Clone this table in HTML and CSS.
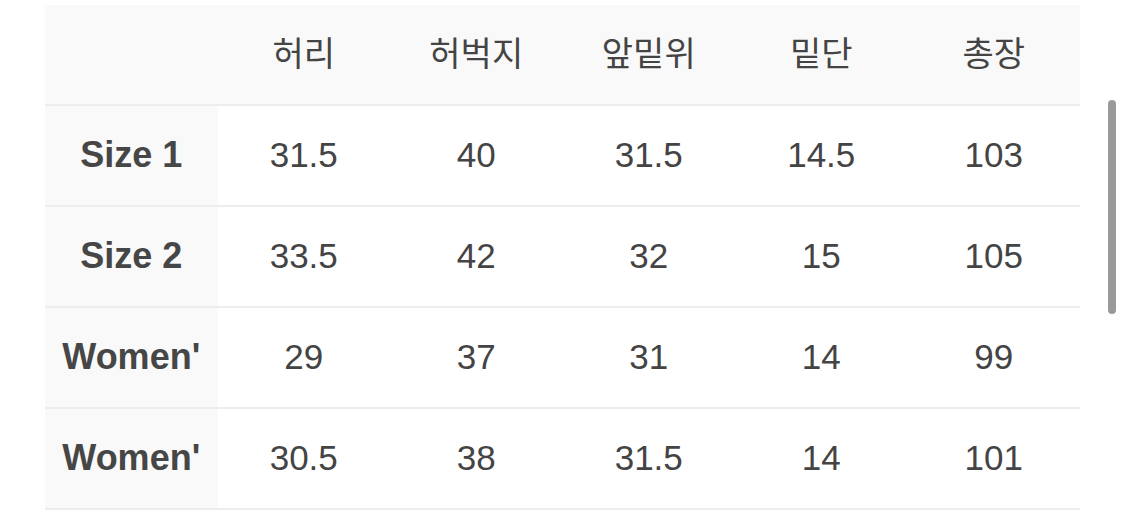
FILE: index.html
```html
<!DOCTYPE html>
<html lang="ko">
<head>
<meta charset="utf-8">
<title>Size table</title>
<link rel="stylesheet" href="styles.css">
</head>
<body>
<div class="wrap">
  <table class="size-table">
    <thead>
      <tr>
        <th class="corner"></th>
        <th>허리</th>
        <th>허벅지</th>
        <th>앞밑위</th>
        <th>밑단</th>
        <th>총장</th>
      </tr>
    </thead>
    <tbody>
      <tr><th class="label">Size 1</th><td>31.5</td><td>40</td><td>31.5</td><td>14.5</td><td>103</td></tr>
      <tr><th class="label">Size 2</th><td>33.5</td><td>42</td><td>32</td><td>15</td><td>105</td></tr>
      <tr><th class="label">Women'</th><td>29</td><td>37</td><td>31</td><td>14</td><td>99</td></tr>
      <tr><th class="label">Women'</th><td>30.5</td><td>38</td><td>31.5</td><td>14</td><td>101</td></tr>
    </tbody>
  </table>
  <div class="scrollbar"></div>
</div>
</body>
</html>
```
FILE: styles.css
```css
html, body {
  margin: 0;
  padding: 0;
  background: #ffffff;
}
body {
  font-family: "Liberation Sans", "Noto Sans CJK KR", sans-serif;
  color: #444444;
}
.wrap {
  position: relative;
  width: 1125px;
  height: 514px;
  overflow: hidden;
  padding: 5px 45px 0;
  box-sizing: border-box;
}
.size-table {
  width: 1035px;
  table-layout: fixed;
  border-collapse: collapse;
  border-spacing: 0;
}
.size-table th,
.size-table td {
  height: 97px;
  padding: 0 0 2px;
  text-align: center;
  vertical-align: middle;
  border-bottom: 2px solid #ededed;
  font-size: 35px;
  line-height: 1;
}
.size-table thead th {
  height: 93px;
  padding: 0 0 6px;
  background: #f9f9f9;
  font-family: "Noto Sans CJK KR", sans-serif;
  font-weight: 400;
  font-size: 34px;
  color: #444444;
}
.size-table .label {
  background: #f9f9f9;
  font-weight: 700;
  font-size: 36px;
  color: #464646;
}
.size-table td {
  font-weight: 400;
  color: #444444;
}
.scrollbar {
  position: absolute;
  left: 1108px;
  top: 100px;
  width: 8px;
  height: 214px;
  border-radius: 4px;
  background: #9a9a9a;
}
```
